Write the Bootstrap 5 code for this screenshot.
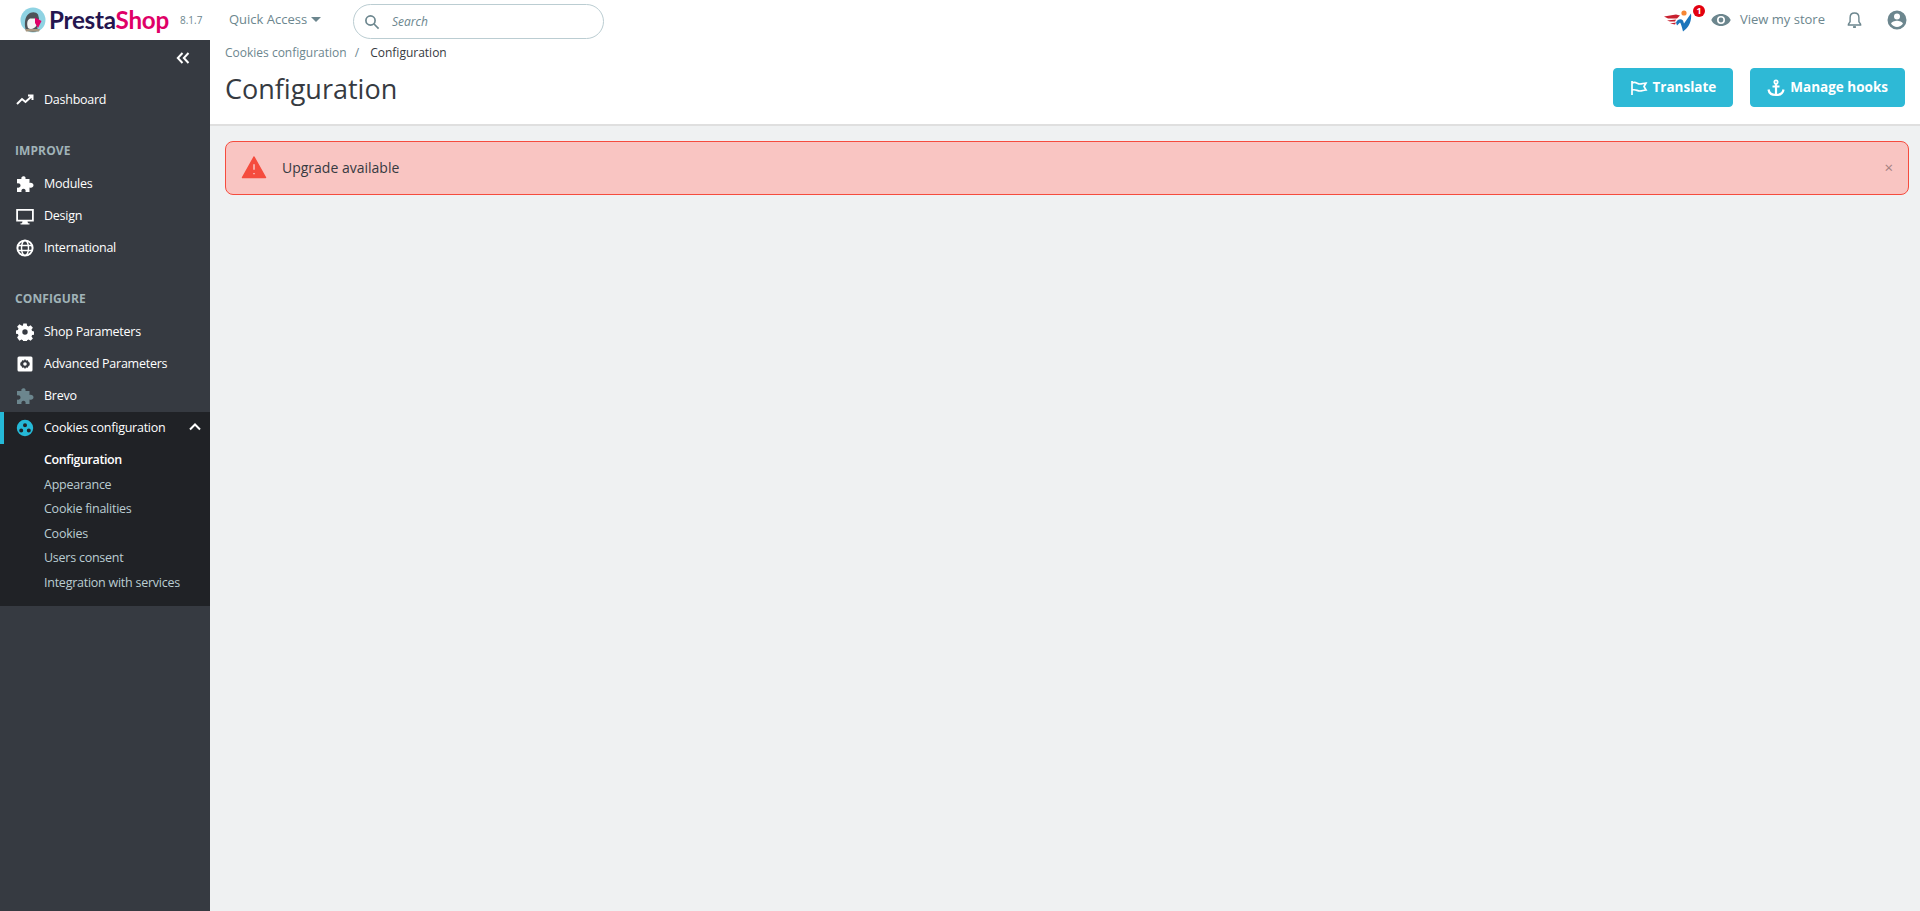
<!DOCTYPE html>
<html lang="en">
<head>
<meta charset="utf-8">
<title>Configuration</title>
<link href="https://cdn.jsdelivr.net/npm/bootstrap@5.3.0/dist/css/bootstrap.min.css" rel="stylesheet">
<style>
html,body{height:100%;overflow:hidden}
body{font-family:"Open Sans",sans-serif;font-size:13px;color:#363a41;background:#eff1f2}
.topbar{height:40px;background:#fff}
.brand{width:229px;padding-left:20px;gap:3px}
.brand-name{font-family:"Lato",sans-serif;font-size:24.2px;font-weight:700;color:#25164f;letter-spacing:-.25px;line-height:40px}
.brand-name span{color:#df0067}
.ver{font-size:10px;color:#6c868e;margin-left:8px}
.quick{font-size:13px;color:#6c868e;width:124px}
.caret-dn{display:inline-block;border:5px solid transparent;border-top-color:#6c868e;border-bottom:0;margin-left:4px;vertical-align:2px}
.searchbox{width:251px;height:35px;border:1px solid #bbcdd2;border-radius:18px;padding-left:10px;gap:12px;margin-top:3px}
.searchbox i{font-size:12px;color:#6c868e}
.righttop{padding-right:13px;color:#6c868e}
.storelink{font-size:13px;color:#6c868e;margin-right:22px}
.promo{position:relative;width:30px;height:25px;margin-right:17px}
.promo svg{display:block}
.promo-badge{position:absolute;top:-3px;right:-11px;width:12px;height:12px;border-radius:50%;background:#e3000f;color:#fff;font-size:9px;font-weight:700;line-height:12px;text-align:center}
.eye{margin-right:9px}
.bell{margin-right:25px}
.mainwrap{height:871px}
.sidenav{width:210px;flex:none;background:#363a41;color:#fff;font-size:12.5px}
.collapse-row{height:41px;padding:8px 20px 0 0;text-align:right}
.nav-it{height:32px;padding-left:16px;gap:10px;color:#fff;text-decoration:none;white-space:nowrap;letter-spacing:-.25px}
.nav-it svg{width:18px;height:18px;flex:none}
.nav-head{color:#a0b3b8;font-weight:700;font-size:12px;padding-left:15px;line-height:16px;letter-spacing:.1px}
.head-1{margin-top:27px;margin-bottom:9px}
.head-2{margin-top:27px;margin-bottom:9px}
.dash{margin-top:3px}
.open-group{background:#202226;height:194px}
.open-it{border-left:4px solid #25b9d7;padding-left:12px;position:relative;height:32px}
.chev{position:absolute;right:9px;top:11px}
.subnav{padding-top:4px}
.subnav a{display:block;height:24.5px;line-height:24.5px;padding-left:44px;color:#bbcdd2;text-decoration:none;letter-spacing:-.25px}
.subnav a.cur{color:#fff;font-weight:600;letter-spacing:-.4px}
.content{min-width:0}
.headbar{height:86px;background:#fff;border-bottom:2px solid #dfdfdf;padding:0 15px}
.crumbs{font-size:12px;line-height:16px;padding-top:5px;color:#6c868e}
.crumbs .sep{margin:0 8px}
.crumbs .now{color:#363a41}
.page-h{font-size:27px;font-weight:400;line-height:36px;color:#363a41;margin:10px 0 0}
.acts{gap:17px;margin-top:28px}
.btn-ps{background:#2eb9d6;border:1px solid #2eb9d6;color:#fff;font-weight:700;font-size:13.5px;height:39px;border-radius:4px;padding:0 16px;gap:5px;display:inline-flex;align-items:center;letter-spacing:0}
.btn-ps:hover{background:#2eb9d6;color:#fff}
.alertbox{margin:15px 11px 0 15px;height:54px;background:#f9c5c2;border:1px solid #f54c3e;border-radius:8px;padding:0 15px 2px;gap:15px;color:#363a41;font-size:14px}
.alertbox .closer{margin-left:auto;color:#a3807f;font-size:15px;line-height:1}
</style>
</head>
<body>
<header class="topbar d-flex align-items-center">
  <div class="brand d-flex align-items-center">
    <svg width="26" height="26" viewBox="0 0 26 26"><circle cx="13" cy="13" r="12.500" fill="#8fd3e3"/><path d="M5.500 22c-1.500-7 0-12 2.500-14.500 3-3 8-3 10 0l1 4-2 8 1 4c-4 2-9 1.500-12.500-1.500z" fill="#4e5257"/><path d="M8 21c-1.500-4-1-8 2-9.500l6 0 0.500 7c-2 3.500-6 4.500-8.500 2.500z" fill="#f4f4f4"/><path d="M15 10.500l6.500 3.500-3.500 7-3-5z" fill="#df0067"/><path d="M6 24.500h13l1-2.500H5z" fill="#a5967f"/></svg>
    <span class="brand-name">Presta<span>Shop</span></span>
    <span class="ver">8.1.7</span>
  </div>
  <div class="quick">Quick Access<span class="caret-dn"></span></div>
  <div class="searchbox d-flex align-items-center">
    <svg width="16" height="16" viewBox="0 0 16 16" fill="none" stroke="#6c868e" stroke-width="1.700"><circle cx="6.500" cy="6.500" r="4.600"/><path d="M10 10l4.600 4.600"/></svg>
    <i>Search</i>
  </div>
  <div class="righttop ms-auto d-flex align-items-center">
    <span class="promo d-block">
      <svg width="30" height="25" viewBox="0 0 30 24"><path d="M0 8l12-2 4 1-3 3H4z" fill="#c8202f"/><path d="M3 12l9-1-1 2H6zM6 15l6-1-1 2z" fill="#c8202f"/><path d="M12 14c2-4 5-4 7-2l1 3 7-10c1 7-2 14-8 18-1-4-2-8-3-9l-3 3z" fill="#1b75bb"/><circle cx="20" cy="4.500" r="2.600" fill="#f58634"/></svg>
      <span class="promo-badge">1</span>
    </span>
    <svg class="eye" width="20" height="14" viewBox="0 0 20 14"><path fill="#6c868e" d="M10 1C5.500 1 1.800 3.500 0.300 7c1.500 3.500 5.200 6 9.700 6s8.200-2.500 9.700-6C18.200 3.500 14.500 1 10 1zm0 10a4 4 0 1 1 0-8 4 4 0 0 1 0 8zm0-6.400a2.400 2.400 0 1 0 0 4.800 2.400 2.400 0 0 0 0-4.800z"/></svg>
    <span class="storelink">View my store</span>
    <svg class="bell" width="15" height="20" viewBox="0 0 16 20" fill="none" stroke="#6c868e" stroke-width="1.500"><path d="M8 2.500c-3 0-4.700 2.200-4.700 5v4.300L1.500 14.500v.8h13v-.8l-1.800-2.700V7.500c0-2.800-1.700-5-4.700-5z"/><path d="M6.500 17.500h3" stroke-width="2"/></svg>
    <svg width="20" height="20" viewBox="0 0 20 20"><path fill="#6c868e" fill-rule="evenodd" d="M10 .5a9.500 9.500 0 1 0 0 19 9.500 9.500 0 0 0 0-19zm0 3a3 3 0 1 1 0 6 3 3 0 0 1 0-6zm0 13.400c-2.400 0-4.600-1.200-5.900-3.100.1-1.900 3.900-3 5.900-3s5.800 1.100 5.900 3c-1.300 1.900-3.500 3.100-5.900 3.100z"/></svg>
  </div>
</header>
<div class="mainwrap d-flex">
  <nav class="sidenav">
    <div class="collapse-row"><svg width="14" height="12" viewBox="0 0 14 12" fill="none" stroke="#fff" stroke-width="2"><path d="M6.500 1L1.800 6l4.700 5M12.500 1L7.800 6l4.700 5"/></svg></div>
    <a class="nav-it d-flex align-items-center dash" href="#"><svg viewBox="0 0 18 18" fill="none" stroke="#fff" stroke-width="2"><path d="M1 13l5-5 3.500 3L16 5M12 4.500h4.500V9"/></svg>Dashboard</a>
    <div class="nav-head head-1">IMPROVE</div>
    <a class="nav-it d-flex align-items-center" href="#"><svg viewBox="0 0 18 18"><path fill="#fff" d="M6.500 1.500c2-1 3.500.3 3 2.500h4v4c2-.6 4 .3 4 2.300s-2 3-4 2.200V17H9.500c.6-2-.4-3.300-2-3.300S5 15 5.500 17H1v-4.500c2 .6 3.500-.4 3.500-2S3 8 1 8.500V4h4.500c-.5-1 0-2 1-2.500z"/></svg>Modules</a>
    <a class="nav-it d-flex align-items-center" href="#"><svg viewBox="0 0 18 18"><path fill="#fff" fill-rule="evenodd" d="M.2 2h17.600v12.500h-6.300l.5 1.800h1.500v1.200h-9v-1.200H6l.5-1.800H.2zm1.800 1.800v8.900h14V3.800z"/></svg>Design</a>
    <a class="nav-it d-flex align-items-center" href="#"><svg viewBox="0 0 18 18" fill="none" stroke="#fff" stroke-width="1.400"><circle cx="9" cy="9" r="7.600" stroke-width="2"/><ellipse cx="9" cy="9" rx="3.500" ry="7.600"/><path d="M1.500 6.500h15M1.500 11.500h15"/></svg>International</a>
    <div class="nav-head head-2">CONFIGURE</div>
    <a class="nav-it d-flex align-items-center" href="#"><svg viewBox="0 0 18 18"><path fill="#fff" fill-rule="evenodd" d="M7.300 1h3.400l.4 2.300 1.500.7 2-1.300 2.300 2.500-1.400 1.900.6 1.500 2.200.4v3.200l-2.200.4-.6 1.500 1.400 1.900-2.300 2.300-2-1.200-1.500.6-.4 2.300H7.300l-.4-2.300-1.500-.6-2 1.200L1.100 15l1.400-1.900-.6-1.500L-.3 11.200V8l2.200-.4.600-1.500L1.100 4.200l2.300-2.500 2 1.300L6.900 3.300zM9 6.800a2.700 2.700 0 1 0 0 5.400 2.700 2.700 0 0 0 0-5.400z" transform="translate(0 -.5)"/></svg>Shop Parameters</a>
    <a class="nav-it d-flex align-items-center" href="#"><svg viewBox="0 0 18 18"><path fill="#fff" fill-rule="evenodd" d="M3 1.500h12A1.500 1.500 0 0 1 16.500 3v12a1.500 1.500 0 0 1-1.500 1.500H3A1.500 1.500 0 0 1 1.500 15V3A1.500 1.500 0 0 1 3 1.500zM9 4l-1 1.500-1.800-.2-.8 1.600-1.400 1.100.6 1-.6 1 1.400 1.100.8 1.600 1.800-.2L9 14l1-1.500 1.800.2.800-1.600 1.400-1.100-.6-1 .6-1-1.400-1.100-.8-1.600-1.800.2zm0 3.200a1.800 1.800 0 1 1 0 3.600 1.800 1.800 0 0 1 0-3.600z"/></svg>Advanced Parameters</a>
    <a class="nav-it d-flex align-items-center" href="#"><svg viewBox="0 0 18 18"><path fill="#6c868e" d="M6.500 1.500c2-1 3.500.3 3 2.500h4v4c2-.6 4 .3 4 2.300s-2 3-4 2.200V17H9.500c.6-2-.4-3.300-2-3.300S5 15 5.500 17H1v-4.500c2 .6 3.500-.4 3.500-2S3 8 1 8.500V4h4.500c-.5-1 0-2 1-2.500z"/></svg>Brevo</a>
    <div class="open-group">
      <a class="nav-it open-it d-flex align-items-center" href="#"><svg viewBox="0 0 18 18"><path fill="#25b9d7" fill-rule="evenodd" d="M9 .8a8.200 8.200 0 1 0 0 16.400A8.200 8.200 0 0 0 9 .8zm0 3.400a2 2 0 1 1 0 4 2 2 0 0 1 0-4zM5.200 9.500a2 2 0 1 1 0 4 2 2 0 0 1 0-4zm7.600 0a2 2 0 1 1 0 4 2 2 0 0 1 0-4z"/></svg>Cookies configuration
        <svg class="chev" style="width:12px;height:8px" viewBox="0 0 12 8" fill="none" stroke="#fff" stroke-width="2"><path d="M1 6.500l5-5 5 5"/></svg></a>
      <div class="subnav">
        <a class="cur" href="#">Configuration</a>
        <a href="#">Appearance</a>
        <a href="#">Cookie finalities</a>
        <a href="#">Cookies</a>
        <a href="#">Users consent</a>
        <a href="#">Integration with services</a>
      </div>
    </div>
  </nav>
  <main class="content flex-grow-1">
    <div class="headbar d-flex justify-content-between">
      <div>
        <div class="crumbs">Cookies configuration<span class="sep">/</span> <span class="now">Configuration</span></div>
        <h1 class="page-h">Configuration</h1>
      </div>
      <div class="acts d-flex">
        <a class="btn btn-ps" href="#"><svg width="18" height="16" viewBox="0 0 18 16" fill="none" stroke="#fff" stroke-width="1.700"><path d="M2 1v14M2 3c4-2 5 1 8 1 2 0 4-1 6-1l-2 3.500L16 10c-2 0-4 1-6 1-3 0-4-2-8-1"/></svg>Translate</a>
        <a class="btn btn-ps" href="#"><svg width="18" height="18" viewBox="0 0 18 18" fill="none" stroke="#fff" stroke-width="2.200"><circle cx="9" cy="3" r="1.700" stroke-width="1.700"/><path d="M9 5v11M5.500 7.500h7M1.500 10.500c.5 3.500 3.500 5.500 7.500 5.500s7-2 7.500-5.500"/></svg>Manage hooks</a>
      </div>
    </div>
    <div class="alertbox d-flex align-items-center" role="alert">
      <svg width="26" height="24" viewBox="0 0 26 24"><path fill="#f54c3e" stroke="#f54c3e" stroke-width="1.500" stroke-linejoin="round" fill-rule="evenodd" d="M13 2L1.500 22.500h23zM11.500 8.500h3v7h-3zm0 8.700h3v2.800h-3z"/></svg>
      <span>Upgrade available</span>
      <span class="closer">×</span>
    </div>
  </main>
</div>
<script src="https://cdn.jsdelivr.net/npm/bootstrap@5.3.0/dist/js/bootstrap.bundle.min.js"></script>
</body>
</html>
